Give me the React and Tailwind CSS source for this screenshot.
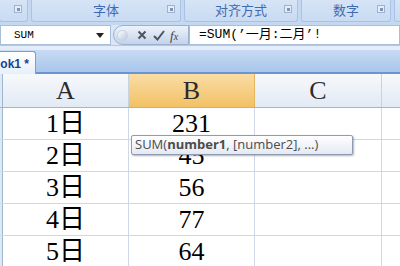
const groups = [
  { label: '', w: 'w-[29px]' },
  { label: '字体', w: 'w-[150px]' },
  { label: '对齐方式', w: 'w-[114px]' },
  { label: '数字', w: 'w-[90px]' },
  { label: '', w: 'w-[40px]' },
];

const rows = [
  ['1日', '231'],
  ['2日', '45'],
  ['3日', '56'],
  ['4日', '77'],
  ['5日', '64'],
];

const serif = "font-['Liberation_Serif','Noto_Sans_CJK_SC',serif]";

const Launcher = () => (
  <span className="absolute right-[5px] top-[5px] w-[8px] h-[8px] border border-[#9fb3cf] bg-[#e4ecf7]">
    <span className="absolute right-[1px] bottom-[1px] w-[3px] h-[3px] bg-[#7d94b6]" />
  </span>
);

export default function App() {
  return (
    <div className="relative w-[400px] h-[266px] overflow-hidden bg-white font-['Liberation_Sans','Noto_Sans_CJK_SC',sans-serif]">
      {/* Ribbon group labels */}
      <div className="flex h-[25px] bg-[#c4d8f1] gap-[3px] -ml-[1px]">
        {groups.map((g, i) => (
          <div
            key={i}
            className={`relative ${g.w} shrink-0 h-[22px] bg-gradient-to-b from-[#d6e4f6] to-[#c9dbf2] border-b border-x border-[#aac3e4] rounded-b-[3px] flex items-center justify-center text-[13px] text-[#3f6ab0]`}
          >
            {g.label}
            {g.label || i === 0 ? <Launcher /> : null}
          </div>
        ))}
      </div>

      {/* Formula bar */}
      <div className="flex h-[21px] bg-[#d9e6f6] border-b border-[#b3c8e6]">
        <div className="w-[111px] h-[20px] bg-white border border-[#a8bed9] flex items-center pl-[13px] pr-[6px] text-[11px] font-['Liberation_Mono',monospace] text-black">
          <span className="flex-1">SUM</span>
          <svg width="8" height="5" viewBox="0 0 8 5"><path d="M0 0h8L4 5z" fill="#222" /></svg>
        </div>
        <div className="ml-[2px] w-[76px] h-[20px] flex items-center rounded-l-[10px] bg-gradient-to-b from-[#eef3fa] to-[#c3d3ea] border border-[#98b1d3]">
          <span className="ml-[3px] w-[11px] h-[11px] rounded-full bg-gradient-to-br from-white to-[#b8c7dc] border border-[#c6d2e2]" />
          <svg className="ml-[9px]" width="10" height="10" viewBox="0 0 10 10"><path d="M1.5 1.5l7 7M8.5 1.5l-7 7" stroke="#4d5563" strokeWidth="2" /></svg>
          <svg className="ml-[6px]" width="12" height="11" viewBox="0 0 12 11"><path d="M1 6l3.5 3.5L11 1" stroke="#4d5563" strokeWidth="2" fill="none" /></svg>
          <span className="ml-[5px] text-[13px] italic font-['Liberation_Serif',serif] text-[#3a4252] leading-none">f<span className="text-[10px]">x</span></span>
        </div>
        <div className="flex-1 h-[20px] bg-white border border-[#a8bed9] flex items-center pl-[9px] text-[13px] font-['Liberation_Mono','Noto_Sans_CJK_SC',monospace] text-black whitespace-nowrap">
          =SUM(’一月:二月’!
        </div>
      </div>

      {/* Sheet tab strip */}
      <div className="h-[4px] bg-[#e3ecf8]" />
      <div className="relative h-[24px] bg-gradient-to-b from-[#c7dbf3] to-[#a9c6ec] border-b-[2px] border-[#6b95d0]">
        <div className="absolute left-0 bottom-[-2px] w-[36px] h-[23px] bg-gradient-to-b from-white to-[#e8effa] border-r border-t border-[#7d9fd0] rounded-tr-[3px] overflow-hidden">
          <span className="absolute right-[6px] top-[3px] text-[12px] font-bold text-[#15428b] whitespace-nowrap">ok1 *</span>
        </div>
      </div>

      {/* Column headers */}
      <div className="flex h-[34px] border-b border-[#9eb6ce]">
        <div className="w-[3px] shrink-0 bg-[#dfe9f5] border-r border-[#9eb6ce]" />
        <div className={`w-[126px] shrink-0 border-r border-[#c5d2e3] bg-gradient-to-b from-[#f7f9fc] to-[#e2eaf5] flex items-center justify-center text-[26px] text-[#2b2b2b] ${serif}`}>A</div>
        <div className={`w-[126px] shrink-0 border-r border-[#e6b560] bg-gradient-to-b from-[#fadca4] to-[#f2c163] flex items-center justify-center text-[26px] text-[#2b2b2b] ${serif}`}>B</div>
        <div className={`w-[127px] shrink-0 border-r border-[#c5d2e3] bg-gradient-to-b from-[#f7f9fc] to-[#e2eaf5] flex items-center justify-center text-[26px] text-[#2b2b2b] ${serif}`}>C</div>
        <div className="flex-1 bg-gradient-to-b from-[#f7f9fc] to-[#e2eaf5]" />
      </div>

      {/* Grid */}
      {rows.map(([a, b]) => (
        <div key={a} className={`flex h-[32px] border-b border-[#d0d7e5] text-[26px] text-black ${serif}`}>
          <div className="w-[3px] shrink-0 bg-[#dfe9f5] border-r border-[#9eb6ce]" />
          <div className="w-[126px] shrink-0 border-r border-[#d0d7e5] flex items-center justify-center">{a}</div>
          <div className="w-[126px] shrink-0 border-r border-[#d0d7e5] flex items-center justify-center">{b}</div>
          <div className="w-[127px] shrink-0 border-r border-[#d0d7e5]" />
          <div className="flex-1" />
        </div>
      ))}

      {/* Function tooltip */}
      <div className="absolute left-[131px] top-[135px] w-[222px] h-[20px] rounded-[2px] border border-[#8f9bb0] bg-gradient-to-b from-white to-[#e4e9f2] shadow-[1px_1px_2px_rgba(0,0,0,0.3)] flex items-center pl-[3px] text-[13px] text-[#4c4c4c] whitespace-nowrap font-['Open_Sans',sans-serif]">
        SUM(<b>number1</b>, [number2], ...)
      </div>
    </div>
  );
}
